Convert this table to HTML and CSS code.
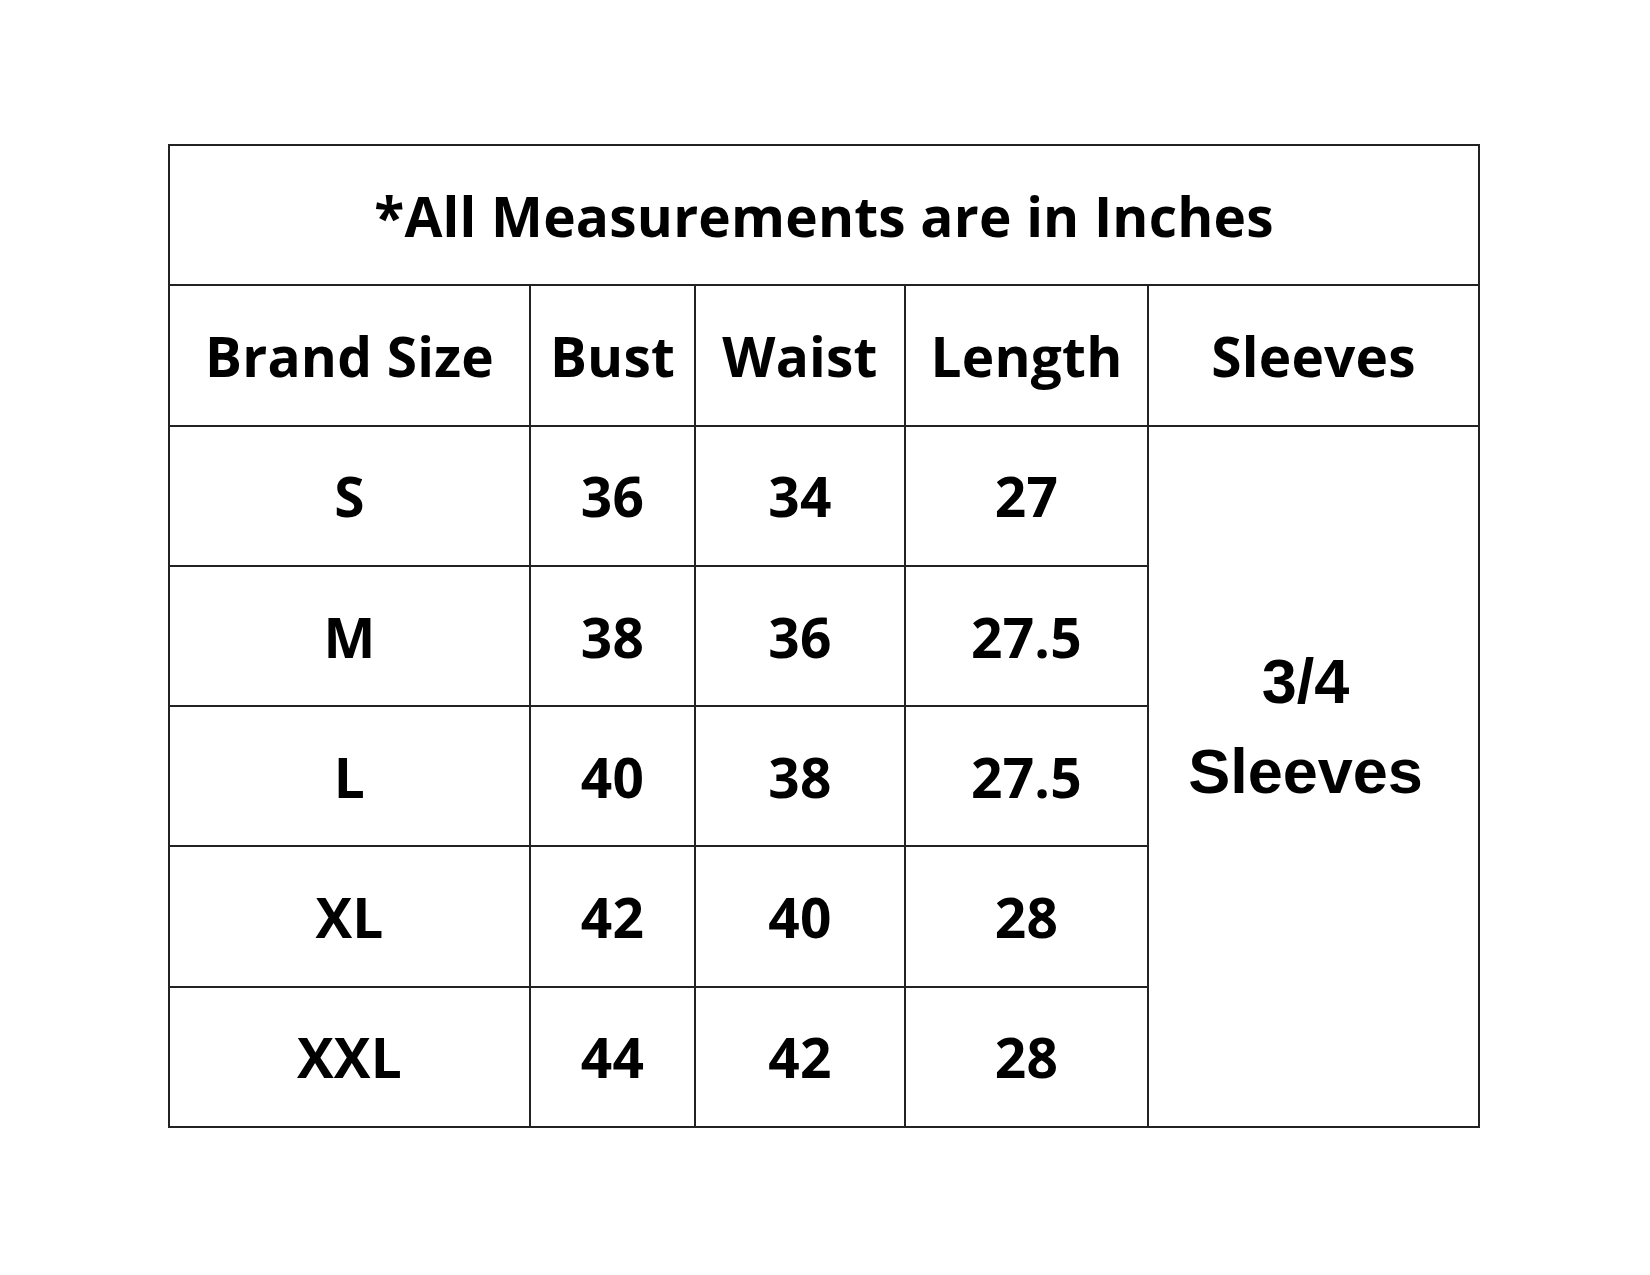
FILE: index.html
```html
<!DOCTYPE html>
<html lang="en">
<head>
<meta charset="utf-8">
<title>Size Chart</title>
<link rel="stylesheet" href="styles.css">
</head>
<body>
<table class="chart">
  <colgroup>
    <col class="c1"><col class="c2"><col class="c3"><col class="c4"><col class="c5">
  </colgroup>
  <tr class="row">
    <td colspan="5" class="title">*All Measurements are in Inches</td>
  </tr>
  <tr class="row">
    <td>Brand Size</td><td>Bust</td><td>Waist</td><td>Length</td><td>Sleeves</td>
  </tr>
  <tr class="row">
    <td>S</td><td>36</td><td>34</td><td>27</td>
    <td rowspan="5" class="sleeve">3/4<br>Sleeves</td>
  </tr>
  <tr class="row"><td>M</td><td>38</td><td>36</td><td>27.5</td></tr>
  <tr class="row"><td>L</td><td>40</td><td>38</td><td>27.5</td></tr>
  <tr class="row"><td>XL</td><td>42</td><td>40</td><td>28</td></tr>
  <tr class="row"><td>XXL</td><td>44</td><td>42</td><td>28</td></tr>
</table>
</body>
</html>
```
FILE: styles.css
```css
html, body {
  margin: 0;
  padding: 0;
  background: #ffffff;
}
.chart {
  border-collapse: collapse;
  width: 1310px;
  margin: 144px 0 0 168px;
  table-layout: fixed;
  font-family: "Open Sans", Lato, sans-serif;
  font-weight: 700;
  color: #000;
}
.c1 { width: 361px; }
.c2 { width: 165px; }
.c3 { width: 210px; }
.c4 { width: 243px; }
.c5 { width: 331px; }
.chart td {
  border: 2px solid #222;
  text-align: center;
  vertical-align: middle;
  padding: 0;
  font-size: 55px;
  line-height: 1;
  letter-spacing: 0.2px;
}
.row { height: 140.3px; }
.chart td.sleeve {
  font-family: "Liberation Sans", Arial, sans-serif;
  font-size: 63px;
  line-height: 90px;
  letter-spacing: 0;
  padding: 0 16px 100px 0;
}
```
